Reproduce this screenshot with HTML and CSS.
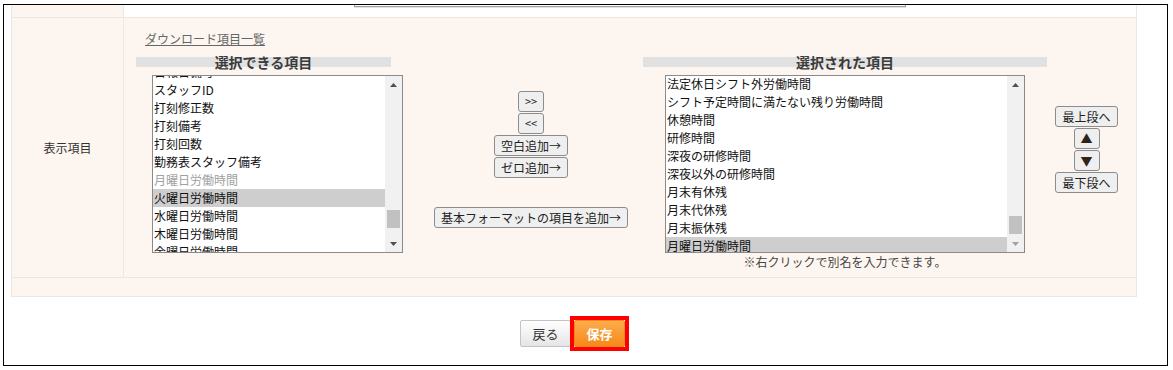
FILE: index.html
```html
<!DOCTYPE html>
<html lang="ja">
<head>
<meta charset="utf-8">
<title>表示項目</title>
<link rel="stylesheet" href="styles.css">
</head>
<body>
<div class="frame">
  <table class="form">
    <tr class="row-top">
      <th class="hd"></th>
      <td class="bd bd-white"><div class="ta-edge"></div></td>
    </tr>
    <tr class="row-main">
      <th class="hd">表示項目</th>
      <td class="bd bd-main">
        <a class="dl-link" href="#">ダウンロード項目一覧</a>
        <div class="picker">
          <div class="bar bar-left">選択できる項目</div>
          <div class="bar bar-right">選択された項目</div>

          <div class="listbox lb-left">
            <div class="lb-view">
              <div class="opts opts-left">
                <div class="opt">日報日備考</div>
                <div class="opt">スタッフID</div>
                <div class="opt">打刻修正数</div>
                <div class="opt">打刻備考</div>
                <div class="opt">打刻回数</div>
                <div class="opt">勤務表スタッフ備考</div>
                <div class="opt opt-disabled">月曜日労働時間</div>
                <div class="opt opt-sel">火曜日労働時間</div>
                <div class="opt">水曜日労働時間</div>
                <div class="opt">木曜日労働時間</div>
                <div class="opt">金曜日労働時間</div>
                <div class="opt">土曜日労働時間</div>
              </div>
            </div>
            <div class="sb">
              <div class="sb-btn"><svg width="7" height="4" viewBox="0 0 7 4"><polygon points="0,4 7,4 3.5,0" fill="#505050"/></svg></div>
              <div class="sb-track"><div class="sb-thumb thumb-left"></div></div>
              <div class="sb-btn"><svg width="7" height="4" viewBox="0 0 7 4"><polygon points="0,0 7,0 3.5,4" fill="#505050"/></svg></div>
            </div>
          </div>

          <div class="mid-btns">
            <button class="btn btn-narrow">&gt;&gt;</button>
            <button class="btn btn-narrow">&lt;&lt;</button>
            <button class="btn">空白追加→</button>
            <button class="btn">ゼロ追加→</button>
            <button class="btn btn-wide">基本フォーマットの項目を追加→</button>
          </div>

          <div class="listbox lb-right">
            <div class="lb-view">
              <div class="opts opts-right">
                <div class="opt">法定休日シフト外労働時間</div>
                <div class="opt">シフト予定時間に満たない残り労働時間</div>
                <div class="opt">休憩時間</div>
                <div class="opt">研修時間</div>
                <div class="opt">深夜の研修時間</div>
                <div class="opt">深夜以外の研修時間</div>
                <div class="opt">月末有休残</div>
                <div class="opt">月末代休残</div>
                <div class="opt">月末振休残</div>
                <div class="opt opt-sel">月曜日労働時間</div>
              </div>
            </div>
            <div class="sb">
              <div class="sb-btn"><svg width="7" height="4" viewBox="0 0 7 4"><polygon points="0,4 7,4 3.5,0" fill="#505050"/></svg></div>
              <div class="sb-track"><div class="sb-thumb thumb-right"></div></div>
              <div class="sb-btn"><svg width="7" height="4" viewBox="0 0 7 4"><polygon points="0,0 7,0 3.5,4" fill="#a3a3a3"/></svg></div>
            </div>
          </div>

          <div class="order-btns">
            <button class="btn">最上段へ</button>
            <button class="btn btn-tri">▲</button>
            <button class="btn btn-tri">▼</button>
            <button class="btn">最下段へ</button>
          </div>

          <div class="note">※右クリックで別名を入力できます。</div>
        </div>
      </td>
    </tr>
    <tr class="row-foot">
      <td class="bd-foot" colspan="2"></td>
    </tr>
  </table>
  <div class="actions">
    <button class="act act-back">戻る</button>
    <span class="mark"><button class="act act-save">保存</button></span>
  </div>
</div>
</body>
</html>
```

FILE: styles.css
```css
* { box-sizing: border-box; }

html, body {
  margin: 0;
  padding: 0;
  background: #fff;
}

body {
  font-family: "Noto Sans CJK JP", "Noto Sans", sans-serif;
  font-size: 12px;
  color: #222;
}

.frame {
  margin: 4px 0 0 3px;
  width: 1165px;
  height: 362px;
  border: 1px solid #000;
  overflow: hidden;
}

.form {
  margin-left: 7px;
  width: 1126px;
  border-collapse: separate;
  border-spacing: 0;
  border-left: 1px solid #efe6de;
  border-right: 1px solid #efe6de;
  background: #fdf6f0;
}

.hd {
  width: 112px;
  padding: 0;
  font-weight: normal;
  color: #333;
  text-align: center;
  border-right: 1px solid #efe6de;
  border-bottom: 1px solid #efe6de;
  background: #fdf6f0;
}

.bd {
  padding: 0;
  border-bottom: 1px solid #efe6de;
  vertical-align: top;
}

.row-top .hd,
.row-top .bd {
  height: 13px;
}

.bd-white {
  background: #fff;
}

.ta-edge {
  margin-left: 230px;
  width: 552px;
  height: 2px;
  border: 1px solid #a0a0a0;
  border-top: none;
  box-shadow: 0 1px 0 #e4e4e4;
}

.bd-main {
  padding: 12px 0 7px 12px;
}

.dl-link {
  display: block;
  margin-left: 9px;
  line-height: 17px;
  color: #666;
  text-decoration: underline;
}

.picker {
  margin-top: 10px;
  display: grid;
  grid-template-columns: 267px 240px 404px 79px;
}

.bar {
  height: 10px;
  line-height: 10px;
  margin-bottom: 8px;
  background: #e1e1e1;
  font-size: 14px;
  font-weight: bold;
  color: #3a3a3a;
  text-align: center;
  white-space: nowrap;
}

.bar-left {
  grid-column: 1;
  grid-row: 1;
  width: 255px;
}

.bar-right {
  grid-column: 3;
  grid-row: 1;
}

.listbox {
  grid-row: 2;
  height: 178px;
  display: flex;
  border: 1px solid #8a8a8a;
  background: #fff;
}

.lb-left {
  grid-column: 1;
  margin-left: 16px;
  margin-right: 0;
}

.lb-right {
  grid-column: 3;
  margin: 0 22px;
}

.lb-view {
  flex: 1;
  overflow: hidden;
}

.opts-left { margin-top: -13px; }
.opts-right { margin-top: -1px; }

.opt {
  height: 18px;
  line-height: 18px;
  padding: 0 2px 0 1px;
  white-space: nowrap;
  color: #111;
}

.opt-disabled { color: #a0a0a0; }
.opt-sel { background: #cecece; }

.sb {
  width: 17px;
  display: flex;
  flex-direction: column;
  background: #f1f1f1;
}

.sb-btn {
  height: 17px;
  display: flex;
  align-items: center;
  justify-content: center;
}

.sb-btn svg { display: block; }

.sb-track { flex: 1; }

.sb-thumb {
  height: 18px;
  margin: 0 2px;
  background: #c1c1c1;
}

.thumb-left { margin-top: 117px; }
.thumb-right { margin-top: 123px; }

.btn {
  height: 21px;
  padding: 0 6px;
  line-height: 19px;
  border: 1px solid #8c8c8c;
  border-radius: 3px;
  background: #efefef;
  font-family: "Noto Sans CJK JP", "Noto Sans", sans-serif;
  font-size: 12px;
  color: #222;
  white-space: nowrap;
}

.btn-narrow {
  width: 26px;
  padding: 0;
  font-size: 11px;
}

.btn-wide {
  margin-top: 28px;
}

.btn-tri {
  width: 26px;
  padding: 0;
  color: #2e2418;
}

.mid-btns {
  grid-column: 2;
  grid-row: 2;
  padding: 16px 0 0 16px;
  display: flex;
  flex-direction: column;
  align-items: center;
  gap: 1px;
}

.order-btns {
  grid-column: 4;
  grid-row: 2;
  padding-top: 31px;
  display: flex;
  flex-direction: column;
  align-items: center;
  gap: 1px;
}

.note {
  grid-column: 3;
  grid-row: 3;
  line-height: 17px;
  text-align: center;
  color: #444;
}

.row-foot .bd-foot {
  height: 19px;
  padding: 0;
  border-bottom: 1px solid #efe6de;
}

.actions {
  margin: 19px 0 0 7px;
  width: 1126px;
  padding-left: 1px;
  display: flex;
  justify-content: center;
  align-items: center;
  gap: 0;
}

.act {
  width: 51px;
  height: 27px;
  padding: 0;
  border-radius: 2px;
  font-family: "Noto Sans CJK JP", "Noto Sans", sans-serif;
  font-size: 13px;
  line-height: 25px;
}

.act-back {
  border: 1px solid #c4c4c4;
  background: linear-gradient(#ffffff, #e5e5e5);
  color: #333;
}

.mark {
  display: flex;
  margin-left: -1px;
  border: 4px solid #ff0000;
}

.act-save {
  display: block;
  border: 1px solid #f08a16;
  background: linear-gradient(#fcac4c, #f6891a);
  color: #fff;
  font-weight: bold;
}
```
